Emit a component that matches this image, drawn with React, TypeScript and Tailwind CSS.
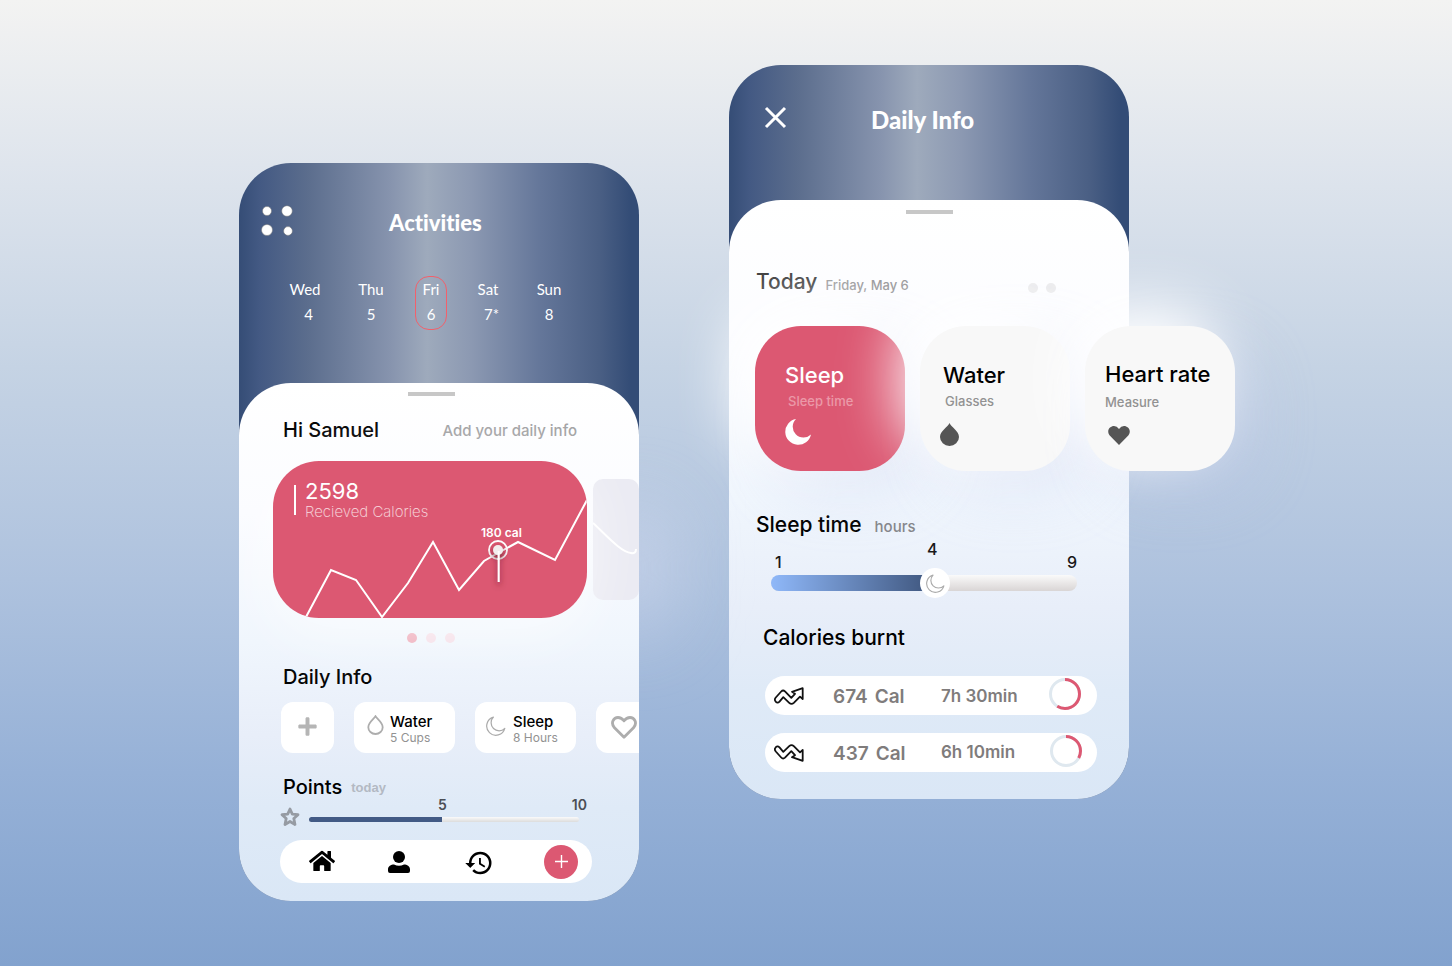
import React from "react";
import { FaHome, FaPlus } from "react-icons/fa";
import { MdHistory } from "react-icons/md";

const inter = "font-['Inter','Liberation_Sans',sans-serif]";
const lato = "font-['Lato','Open_Sans',sans-serif] [font-variant-ligatures:none]";
const header = "bg-[linear-gradient(90deg,#354d76_0%,#435983_5%,#5b6d8d_17%,#8794ae_38%,#9eaabc_47%,#8c99b2_58%,#65779a_75%,#4a5f84_90%,#334c76_98%)]";
const sheet = "bg-[linear-gradient(180deg,#ffffff_0%,#fbfcff_25%,#f0f6fd_50%,#e8eef9_68%,#dfeaf7_82%,#dae7f6_100%)]";

const days = [
  { name: "Wed", date: "4", active: false, shift: "pl-[7px]" },
  { name: "Thu", date: "5", active: false, shift: "" },
  { name: "Fri", date: "6", active: true, shift: "" },
  { name: "Sat", date: "7*", active: false, shift: "pl-[7px]" },
  { name: "Sun", date: "8", active: false, shift: "" },
];

function MoonOutline({ className }: { className: string }) {
  return (
    <svg className={className} viewBox="0 0 20 20" fill="none" stroke="currentColor" strokeWidth="1.2" strokeLinejoin="round">
      <path d="M7.4 1.2A9.2 9.2 0 1 0 18.8 12.4A7.4 7.4 0 0 1 7.4 1.2Z" />
    </svg>
  );
}

function TrendIcon({ down }: { down?: boolean }) {
  return (
    <svg className={down ? "h-[20px] w-[30px] -scale-y-100" : "h-[20px] w-[30px]"} viewBox="0 0 30 20" fill="none" stroke="#111" strokeWidth="1.8" strokeLinejoin="round">
      <path d="M1.300 15Q.200 13.500 1.800 11.500L7.200 5.500Q9 3.500 11 5.300L17.300 11.800L21 7.800L18 5.800L28.700 2.200V13L26 10.600L19.800 16.800Q17.500 19 15.200 16.800L9.300 11.200L5.500 15.600Q3.200 18 1.300 15Z" />
    </svg>
  );
}

function Ring({ percent }: { percent: number }) {
  return (
    <svg className="mb-[3px] size-[34px]" viewBox="0 0 34 34" fill="none" strokeWidth="3">
      <circle cx="17" cy="17" r="14.5" stroke="#dfe8ef" />
      <circle cx="17" cy="17" r="14.5" stroke="#dd5872" pathLength="100" strokeDasharray={`${percent} 100`} transform="rotate(-90 17 17)" />
    </svg>
  );
}

function ActivitiesPhone() {
  return (
    <div className="relative mt-[163px] w-[400px] shrink-0">
      <span className="absolute -right-[24px] top-[345px] h-[120px] w-[60px] rounded-full bg-[#dfe3f5]/60 blur-2xl" />
      <section className={`relative flex flex-col overflow-hidden rounded-[52px] ${header}`}>
        <header className={`h-[220px] text-white ${lato}`}>
          <div className="flex h-[74px] items-start px-[22px] pt-[42px]">
            <button aria-label="Menu" className="w-[32px]">
              <svg className="size-[32px]" viewBox="0 0 32 32" fill="#fff" stroke="#777" strokeWidth="0.500">
                <circle cx="6" cy="6" r="4.5" />
                <circle cx="26" cy="6" r="5.3" />
                <circle cx="6" cy="25" r="5.5" />
                <circle cx="27" cy="26" r="4.4" />
              </svg>
            </button>
            <h1 className="ml-[96px] mt-[4px] text-[22px] font-black leading-7">Activities</h1>
          </div>
          <div className="mt-[39px] grid grid-cols-[64px_68px_52px_62px_60px] pl-[34px] text-[15px] leading-[26px]">
            {days.map((d) => (
              <button key={d.name} className="flex justify-center">
                <span className={d.active ? "flex h-[54px] w-[32px] flex-col items-center rounded-[14px] border border-[#f2606b]" : "flex h-[54px] flex-col items-center border border-transparent"}>
                  <span className="leading-6">{d.name}</span>
                  <span className={d.shift}>{d.date}</span>
                </span>
              </button>
            ))}
          </div>
        </header>

        <main className={`rounded-t-[52px] pb-[18px] ${sheet} ${inter}`}>
          <div className="mx-auto h-[13px] w-[47px] -translate-x-2 border-b-4 border-[#c7c7c7]" />
          <div className="flex items-center justify-between pl-[44px] pr-[62px] pt-[20px]">
            <h2 className="text-[20px] font-medium leading-7">Hi Samuel</h2>
            <a href="#daily" className="pt-[2px] text-[15px] font-medium leading-6 text-[#a3a3a5]">Add your daily info</a>
          </div>

          <div className="flex items-center gap-[6px] pl-[34px] pt-[17px]">
            <article className="relative h-[157px] w-[314px] shrink-0 overflow-hidden rounded-[46px] bg-[#dc5872] text-white shadow-[0_10px_60px_rgba(255,255,255,0.7)]">
              <svg className="absolute inset-0 size-full" viewBox="0 0 314 157" fill="none" stroke="#fff" strokeWidth="2">
                <defs>
                  <filter id="pin" x="-10" y="-5" width="40" height="60" filterUnits="userSpaceOnUse">
                    <feDropShadow dx="0" dy="3" stdDeviation="3" floodColor="#5c1426" floodOpacity="0.8" />
                  </filter>
                </defs>
                <path d="M33 156L58 109L83 119L109 156L135 122L160 81L186 129L211 100L225 92L245 81L282 99L314 39" />
                <circle cx="225" cy="89" r="9" strokeWidth="1.8" />
                <g transform="translate(215 80)" filter="url(#pin)">
                  <circle cx="10" cy="9" r="5" fill="#f3eeee" stroke="none" />
                  <path d="M10.700 10V41" />
                </g>
              </svg>
              <div className="flex gap-[9px] pl-[21px] pt-[18px]">
                <span className="mt-[6px] h-[30px] w-[2px] bg-white" />
                <div>
                  <p className="text-[22px] leading-6">2598</p>
                  <p className="text-[15px] font-extralight leading-[18px] text-white/80">Recieved Calories</p>
                </div>
              </div>
              <p className="pl-[208px] pt-[3px] text-[12px] font-semibold leading-[18px]">180 cal</p>
            </article>
            <article className="h-[121px] w-[46px] shrink-0 overflow-hidden rounded-[10px] bg-[#ebebf3]">
              <svg className="h-full w-[50px]" viewBox="0 0 50 121" fill="none" stroke="#fff" strokeWidth="2">
                <path d="M0 44C14 57 28 73 38 74Q43 75 43 70" />
              </svg>
            </article>
          </div>

          <div className="flex gap-[9px] pl-[168px] pt-[15px]">
            <span className="size-[10px] rounded-full bg-[#eeabb9]" />
            <span className="size-[10px] rounded-full bg-[#f5dfe8]" />
            <span className="size-[10px] rounded-full bg-[#f5dfe8]" />
          </div>

          <h2 id="daily" className="pl-[44px] pt-[20px] text-[20px] font-medium leading-7">Daily Info</h2>
          <div className="flex gap-[20px] pl-[42px] pt-[11px]">
            <button aria-label="Add" className="flex h-[51px] w-[53px] shrink-0 items-center justify-center rounded-[12px] bg-white pb-[2px] text-[#b5b5b5]">
              <FaPlus className="size-[21px]" />
            </button>
            <button className="flex h-[51px] w-[101px] shrink-0 items-center gap-[6px] rounded-[12px] bg-white pl-[13px] text-left">
              <svg className="mb-[5px] h-[20px] w-[17px] text-[#adadad]" viewBox="0 0 17 20" fill="none" stroke="currentColor" strokeWidth="1.8">
                <path d="M8.500 1.300C7.200 3.600 1.300 7.600 1.300 12.200A7.200 6.800 0 0 0 15.700 12.200C15.700 7.600 9.800 3.600 8.500 1.300Z" />
              </svg>
              <span>
                <span className="block pt-[3px] text-[15px] font-medium leading-[18px]">Water</span>
                <span className="block text-[12px] leading-[14px] text-[#929292]">5 Cups</span>
              </span>
            </button>
            <button className="flex h-[51px] w-[101px] shrink-0 items-center gap-[7px] rounded-[12px] bg-white pl-[11px] text-left">
              <MoonOutline className="mb-[4px] size-[20px] shrink-0 text-[#aaa]" />
              <span>
                <span className="block pt-[3px] text-[15px] font-medium leading-[18px]">Sleep</span>
                <span className="block text-[12px] leading-[14px] text-[#929292]">8 Hours</span>
              </span>
            </button>
            <button aria-label="Heart rate" className="flex h-[51px] w-[101px] shrink-0 items-center rounded-[12px] bg-white pl-[15px]">
              <svg className="h-[23px] w-[26px]" viewBox="0 0 26 23" fill="none" stroke="#adadad" strokeWidth="2.800" strokeLinejoin="round">
                <path d="M13 21.300L3.500 11.800C-1 6.500 3 1.500 7 1.500C10.500 1.500 12 3.500 13 4.800C14 3.500 15.500 1.500 19 1.500C23 1.500 27 6.500 22.500 11.800Z" />
              </svg>
            </button>
          </div>

          <div className="flex items-center gap-[9px] pl-[44px] pt-[20px]">
            <h2 className="text-[20px] font-medium leading-7">Points</h2>
            <span className="pt-[2px] font-['Liberation_Sans_Narrow','Liberation_Sans',sans-serif] text-[13px] font-bold text-[#b3b9c3]">today</span>
          </div>
          <div className="flex pl-[41px] pr-[60px]">
            <svg className="mt-[6px] size-[20px]" viewBox="0 0 20 20" fill="none" stroke="#969ba3" strokeWidth="2.800" strokeLinejoin="round">
              <path d="M10 2L12.300 7.100L18 7.700L13.800 11.500L15 17.500L10 14.500L5 17.500L6.200 11.500L2 7.700L7.700 7.100Z" />
            </svg>
            <div className="ml-[9px] flex-1">
              <div className="-mr-[8px] -mt-[4px] flex justify-between pl-[129px] text-[14px] font-semibold leading-4 text-[#4b4e55]">
                <span>5</span>
                <span>10</span>
              </div>
              <div className="mt-[4px] h-[5px] overflow-hidden rounded-full bg-[linear-gradient(#fafafa,#dcdcdc)]">
                <div className="h-full w-[133px] bg-[#425a85]" />
              </div>
            </div>
          </div>

          <nav className="ml-[41px] mr-[47px] mt-[13px] flex h-[43px] items-center rounded-[22px] bg-white pl-[29px] pr-[14px]">
            <a href="#home" aria-label="Home" className="mb-[2px]"><FaHome className="size-[26px]" /></a>
            <a href="#profile" aria-label="Profile" className="ml-[53px]">
              <svg className="h-[22px] w-[22px]" viewBox="0 0 22 22">
                <circle cx="11" cy="6" r="6" />
                <path d="M0 18.500C0 15 3 13.500 6 13.500Q11 16 16 13.500C19 13.500 22 15 22 18.500V20Q22 22 20 22H2Q0 22 0 20Z" />
              </svg>
            </a>
            <a href="#history" aria-label="History" className="ml-[54px] pt-[2px]"><MdHistory className="size-[30px]" /></a>
            <button aria-label="Add activity" className="ml-auto flex size-[34px] items-center justify-center rounded-full bg-[#dc5872]">
              <svg className="size-[13px]" viewBox="0 0 13 13" stroke="#fff" strokeWidth="1.400"><path d="M6.500 0V13M0 6.500H13" /></svg>
            </button>
          </nav>
        </main>
      </section>
    </div>
  );
}

const glow = "shadow-[-20px_-20px_60px_#ffffff,20px_20px_60px_rgba(190,200,235,0.3)]";

function DailyInfoPhone() {
  return (
    <section className={`mt-[65px] flex w-[400px] shrink-0 flex-col rounded-[52px] ${header}`}>
      <header className="flex h-[135px] items-start pl-[35px] pt-[41px] text-white">
        <button aria-label="Close">
          <svg className="size-[23px]" viewBox="0 0 23 23" stroke="#fff" strokeWidth="3"><path d="M2 2L21 21M21 2L2 21" /></svg>
        </button>
        <h1 className={`ml-[84px] text-[24px] font-black leading-7 ${lato}`}>Daily Info</h1>
      </header>
      <main className={`rounded-[52px] pb-[27px] ${sheet} ${inter}`}>
        <div className="mx-auto h-[14px] w-[47px] border-b-4 border-[#c7c7c7]" />
        <div className="flex items-center pl-[27px] pr-[73px] pt-[52px]">
          <h2 className="text-[21px] font-medium leading-8 text-[#333]">Today</h2>
          <span className="ml-[8px] pt-[6px] text-[13px] font-medium leading-6 text-[#949496]">Friday, May 6</span>
          <span className="ml-auto mt-[12px] size-[10px] rounded-full bg-[#ebebed]" />
          <span className="ml-[8px] mt-[12px] size-[10px] rounded-full bg-[#ebebed]" />
        </div>

        <div className="relative flex gap-[15px] pl-[26px] pt-[28px]">
          <button className={`h-[145px] w-[150px] shrink-0 rounded-[46px] bg-[#dc5872] pl-[30px] pt-[9px] text-left text-white ${glow}`}>
            <span className="block text-[22px] font-medium leading-7">Sleep</span>
            <span className="block pl-[3px] text-[13px] font-medium leading-6 text-[#eb98a8]">Sleep time</span>
            <svg className="mt-[6px] size-[26px]" viewBox="0 0 26 26" fill="#fff"><path d="M11 0A13 13 0 1 0 26 15.500A10.500 10.500 0 0 1 11 0Z" /></svg>
          </button>
          <button className={`h-[145px] w-[150px] shrink-0 rounded-[46px] bg-[#f8f8f8] pl-[23px] pt-[9px] text-left ${glow}`}>
            <span className="block text-[22px] font-medium leading-7">Water</span>
            <span className="block pl-[2px] text-[13px] font-medium leading-6 text-[#929292]">Glasses</span>
            <svg className="-ml-[3px] mt-[10px] h-[23px] w-[19px]" viewBox="0 0 19 23" fill="#555"><path d="M9.500 0C8 4 0 8 0 14A9.500 9 0 0 0 19 14C19 8 11 4 9.500 0Z" /></svg>
          </button>
          <button className={`h-[145px] w-[150px] shrink-0 rounded-[46px] bg-[#f8f8f8] pl-[20px] pt-[9px] text-left ${glow}`}>
            <span className="block whitespace-nowrap text-[22px] font-medium leading-6">Heart rate</span>
            <span className="block pt-[4px] text-[13px] font-medium leading-6 text-[#929292]">Measure</span>
            <svg className="ml-[3px] mt-[12px] h-[19px] w-[22px]" viewBox="0 0 22 19" fill="#555"><path d="M11 19L1.700 9.500C-2 4.500 2 0 6 0Q9 0 11 3Q13 0 16 0C20 0 24 4.500 20.300 9.500Z" /></svg>
          </button>
        </div>

        <div className="flex items-center gap-[13px] pl-[27px] pt-[40px]">
          <h2 className="text-[21px] font-medium leading-7">Sleep time</h2>
          <label htmlFor="hours" className="pt-[3px] text-[15px] font-medium leading-6 text-[#85868a]">hours</label>
        </div>
        <div className="ml-[42px] mr-[52px] flex justify-between pl-[4px] text-[16px] font-medium leading-5 text-[#181818]">
          <span className="pt-[13px]">1</span>
          <span className="pl-[16px]">4</span>
          <span className="pt-[13px]">9</span>
        </div>
        <div className="relative -mt-[4px] ml-[42px] mr-[52px] flex h-[30px] items-center">
          <div className="flex h-[16px] flex-1 overflow-hidden rounded-full bg-[linear-gradient(#fafafa,#d9d5d5)]">
            <div className="w-[160px] bg-[linear-gradient(90deg,#8fb8f9,#435b84_95%)]" />
          </div>
          <span className="absolute left-[149px] flex size-[30px] items-center justify-center rounded-full bg-white">
            <MoonOutline className="size-[19px] text-[#aaa]" />
          </span>
          <input id="hours" type="range" min="1" max="9" defaultValue="4" className="absolute inset-0 w-full opacity-0" />
        </div>

        <h2 className="pl-[34px] pt-[26px] text-[21px] font-medium leading-7">Calories burnt</h2>
        <ul className="flex flex-col gap-[18px] pl-[36px] pr-[32px] pt-[24px] font-semibold text-[#7f7c7c]">
          <li className="flex h-[39px] items-center rounded-[20px] bg-white pl-[9px] pr-[15px]">
            <TrendIcon />
            <span className="ml-[29px] flex w-[108px] gap-[7px] pt-[3px] text-[19px]"><span>674</span><span>Cal</span></span>
            <span className="flex-1 pt-[3px] text-[17px]">7h 30min</span>
            <Ring percent={59} />
          </li>
          <li className="flex h-[39px] items-center rounded-[20px] bg-white pl-[9px] pr-[14px]">
            <TrendIcon down />
            <span className="ml-[29px] flex w-[108px] gap-[7px] pt-[3px] text-[19px]"><span>437</span><span>Cal</span></span>
            <span className="flex-1 text-[17px]">6h 10min</span>
            <Ring percent={33} />
          </li>
        </ul>
      </main>
    </section>
  );
}

export default function App() {
  return (
    <div className="flex min-h-screen items-start justify-center gap-[90px] overflow-hidden bg-[linear-gradient(180deg,#f3f3f2_0%,#dfe5ed_17%,#c5d3e4_38%,#aec2de_60%,#96b1d7_80%,#82a2ce_100%)] pr-[84px]">
      <ActivitiesPhone />
      <DailyInfoPhone />
    </div>
  );
}
